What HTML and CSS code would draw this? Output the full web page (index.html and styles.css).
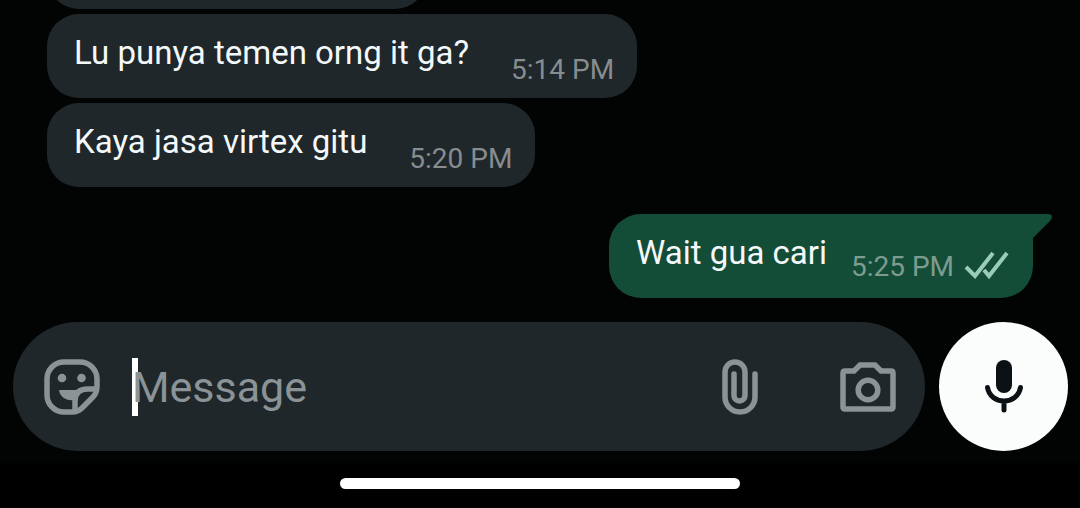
FILE: index.html
```
<!DOCTYPE html>
<html lang="en">
<head>
    <meta charset="UTF-8">
    <meta name="viewport" content="width=device-width, initial-scale=1">
    <title>Chat</title>
    <link rel="stylesheet" href="styles.css">
</head>
<body>
<main class="chat">
    <div class="msg msg-in msg-old"></div>
    <div class="msg msg-in">
        <p>Lu punya temen orng it ga?</p>
        <time>5:14 PM</time>
    </div>
    <div class="msg msg-in">
        <p>Kaya jasa virtex gitu</p>
        <time>5:20 PM</time>
    </div>
    <div class="msg msg-out">
        <p>Wait gua cari</p>
        <time>5:25 PM</time>
        <svg class="ticks" width="46" height="30" viewBox="0 0 46 30">
            <path d="M2 17L11 26L29 3M20 20L25 26L43 3"/>
        </svg>
        <svg class="tail" width="20" height="27" viewBox="0 0 20 27">
            <path d="M0 0H16Q20 0 20 3Q20 5 18 7L1 24V27H0Z"/>
        </svg>
    </div>
</main>
<form class="composer">
    <div class="field">
        <button type="button" class="icon" aria-label="Stickers">
            <svg width="56" height="56" viewBox="0 0 56 56">
                <path class="line" d="M20 3H36A17 17 0 0 1 53 20V27C53 32 52 35 49 38L38 49C35 52 32 53 28 53H20A17 17 0 0 1 3 36V20A17 17 0 0 1 20 3Z"/>
                <path class="line" d="M52 30H44Q31 30 31 42V52"/>
                <circle cx="18" cy="19" r="4.3"/>
                <circle cx="37.5" cy="19" r="4.3"/>
                <path d="M15 31H36L30 41C22 42 16 38 15 31Z"/>
            </svg>
        </button>
        <label class="entry">
            <input type="text" placeholder="Message" aria-label="Message">
            <span class="caret"></span>
        </label>
        <button type="button" class="icon" aria-label="Attach">
            <svg width="36" height="56" viewBox="0 0 36 56">
                <path class="line" d="M12 15V36.500A5.500 5.500 0 0 0 23 36.500V13A10 10 0 0 0 3 13V38A15 15 0 0 0 33 38V15"/>
            </svg>
        </button>
        <button type="button" class="icon icon-camera" aria-label="Camera">
            <svg width="56" height="50" viewBox="0 0 56 50">
                <path class="line" d="M5 9H14L20 3H35L41 9H51Q53 9 53 11V45Q53 47 51 47H5Q3 47 3 45V11Q3 9 5 9Z"/>
                <circle class="line" cx="28" cy="28" r="9.800"/>
            </svg>
        </button>
    </div>
    <button type="button" class="mic" aria-label="Record voice message">
        <svg width="40" height="54" viewBox="0 0 40 54">
            <rect x="12" y="0" width="16" height="33" rx="8"/>
            <path d="M3.500 27.500C5 36 12 41 20 41S35 36 36.500 27.500M20 41V50"/>
        </svg>
    </button>
</form>
<div class="navbar"><span></span></div>
</body>
</html>
```

FILE: styles.css
```
* {
    margin: 0;
    padding: 0;
    box-sizing: border-box;
}
body {
    display: flex;
    flex-direction: column;
    height: 100vh;
    overflow: hidden;
    background-color: #020404;
    color: #f4f8fa;
    font-family: Roboto, sans-serif;
}
button, input {
    border: none;
    outline: none;
    background: none;
    font-family: inherit;
}

/* messages */
.chat {
    flex: 1;
    min-height: 0;
    display: flex;
    flex-direction: column;
    justify-content: flex-end;
    gap: 5px;
    padding: 0 47px 24px;
}
.msg {
    flex: none;
    position: relative;
    display: flex;
    align-items: flex-end;
    height: 84px;
    padding: 0 23px 12px 27px;
    border-radius: 32px;
}
.msg-in {
    align-self: flex-start;
    background-color: #1f272a;
}
.msg-old {
    width: 380px;
}
.msg-out {
    align-self: flex-end;
    margin-top: 22px;
    border-top-right-radius: 0;
    background-color: #144d37;
}
.msg p {
    margin-bottom: 13px;
    font-size: 33px;
    line-height: 40px;
}
.msg time {
    margin-left: 42px;
    color: #868c90;
    font-size: 28px;
    line-height: 32px;
}
.msg-out time {
    margin: 0 0 3px 24px;
    color: #7d9c8f;
}
.ticks {
    margin: 0 0 6px 10px;
    fill: none;
    stroke: #9accb8;
    stroke-width: 4;
}
.tail {
    position: absolute;
    top: 0;
    left: 100%;
    margin-left: -1px;
    fill: #144d37;
}

/* input row */
.composer {
    display: flex;
    gap: 14px;
    padding: 0 12px 0 13px;
}
.field {
    flex: 1;
    min-width: 0;
    display: flex;
    align-items: center;
    height: 129px;
    padding: 0 29px 0 31px;
    border-radius: 65px;
    background-color: #1f272a;
}
.icon {
    flex: none;
    fill: #8b9396;
}
.icon svg, .mic svg {
    display: block;
}
.line {
    fill: none;
    stroke: #8b9396;
    stroke-width: 5.5;
    stroke-linecap: round;
}
.icon-camera {
    margin-left: 82px;
}
.entry {
    flex: 1;
    min-width: 0;
    position: relative;
    z-index: 0;
    margin-left: 32px;
}
.entry input {
    display: block;
    width: 100%;
    color: #f4f8fa;
    font-size: 43px;
    line-height: 58px;
}
.entry input::placeholder {
    color: #8b9396;
    opacity: 1;
}
.caret {
    position: absolute;
    top: 0;
    left: 0;
    z-index: -1;
    width: 6px;
    height: 58px;
    background-color: #fff;
}
.mic {
    flex: none;
    display: flex;
    align-items: center;
    justify-content: center;
    width: 129px;
    height: 129px;
    border-radius: 50%;
    background-color: #fbfcfc;
}
.mic path {
    fill: none;
    stroke: #0a1014;
    stroke-width: 5;
    stroke-linecap: round;
}
.mic rect {
    fill: #0a1014;
}

/* gesture bar */
.navbar {
    display: flex;
    justify-content: center;
    margin-top: 12px;
    padding: 15px 0 19px;
    background-color: #000;
}
.navbar span {
    width: 37%;
    height: 11px;
    border-radius: 6px;
    background-color: #fff;
}
```
